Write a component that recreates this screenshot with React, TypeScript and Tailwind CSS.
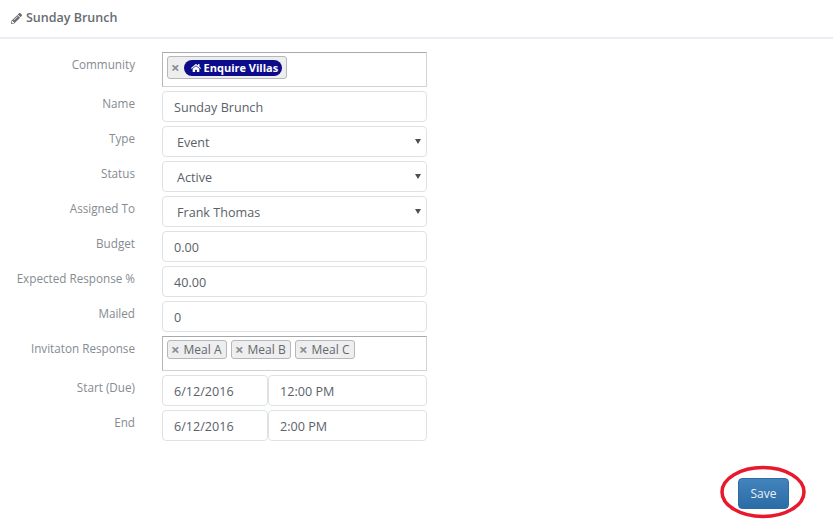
import { FaHome, FaPencilAlt } from "react-icons/fa";
import type { ReactNode } from "react";

const fieldBase =
  "h-[31px] rounded-[4px] border border-[#dfe2e5] bg-white pl-[11px] pr-2 pt-[2px] text-[12.6px] text-[#5a6168] outline-none";

const Row = ({ label, children }: { label: string; children: ReactNode }) => (
  <div className="flex items-start">
    <label className="w-[135px] shrink-0 pt-[3px] text-right text-[11.7px] leading-[18px] text-[#858b92]">{label}</label>
    <div className="ml-[27px] w-[265px]">{children}</div>
  </div>
);

const TextRow = ({ label, value }: { label: string; value: string }) => (
  <Row label={label}>
    <input className={fieldBase + " w-full"} readOnly value={value} />
  </Row>
);

const SelectRow = ({ label, value }: { label: string; value: string }) => (
  <Row label={label}>
    <div className="relative">
      <select
        className="h-[31px] w-full appearance-none rounded-[4px] border border-[#dfe2e5] bg-white pl-[14px] pt-[4px] text-[12.6px] text-[#5a6168] outline-none"
        defaultValue={value}
      >
        <option>{value}</option>
      </select>
      <svg className="absolute right-[6px] top-[13px] h-[5px] w-[6px]" viewBox="0 0 6 5">
        <path d="M0 0h6L3 5z" fill="#4a4f55" />
      </svg>
    </div>
  </Row>
);

const DateRow = ({ label, date, time }: { label: string; date: string; time: string }) => (
  <Row label={label}>
    <div className="flex">
      <input className={fieldBase + " w-[106px] shrink-0"} readOnly value={date} />
      <input className={fieldBase + " min-w-0 flex-1"} readOnly value={time} />
    </div>
  </Row>
);

const Remove = () => <span className="text-[15px] font-bold leading-none text-[#8a8d90]">×</span>;

const Chip = ({ children }: { children: ReactNode }) => (
  <span className="flex h-[19px] w-[60px] items-center gap-[4px] rounded-[3px] border border-[#b4b8bc] bg-[#eeeeee] pl-[3px] text-[12px] leading-none text-[#62686f]">
    <Remove />
    {children}
  </span>
);

const TagBox = ({ children }: { children: ReactNode }) => (
  <div className="flex h-[35px] items-start gap-[4px] border border-[#d0d2d4] border-t-[#a8a9ab] border-l-[#b4b5b7] bg-white pl-[4px] pt-[3px]">
    {children}
  </div>
);

export default function App() {
  return (
    <div className="relative h-[526px] w-[833px] overflow-hidden bg-white font-['Open_Sans',sans-serif]">
      <div className="flex h-[39px] items-center gap-[4px] border-b-2 border-[#e9edf1] pl-[11px] text-[12.5px] font-semibold text-[#666c72]">
        <FaPencilAlt className="h-[11px] w-[11px] text-[#6b6f74]" />
        Sunday Brunch
      </div>

      <div className="flex flex-col gap-[4px] pt-[13px]">
        <Row label="Community">
          <TagBox>
            <span className="flex h-[23px] items-center gap-[3px] rounded-[3px] border border-[#b4b8bc] bg-[#eeeeee] pl-[3px] pr-[4px]">
              <Remove />
              <span className="ml-[1px] flex h-[16px] items-center gap-[3px] rounded-full bg-[#0b0b8c] pl-[7px] pr-[4px] text-[11px] font-bold leading-none text-white">
                <FaHome className="h-[10px] w-[10px]" />
                Enquire Villas
              </span>
            </span>
          </TagBox>
        </Row>
        <TextRow label="Name" value="Sunday Brunch" />
        <SelectRow label="Type" value="Event" />
        <SelectRow label="Status" value="Active" />
        <SelectRow label="Assigned To" value="Frank Thomas" />
        <TextRow label="Budget" value="0.00" />
        <TextRow label="Expected Response %" value="40.00" />
        <TextRow label="Mailed" value="0" />
        <Row label="Invitaton Response">
          <TagBox>
            <Chip>Meal A</Chip>
            <Chip>Meal B</Chip>
            <Chip>Meal C</Chip>
          </TagBox>
        </Row>
        <DateRow label="Start (Due)" date="6/12/2016" time="12:00 PM" />
        <DateRow label="End" date="6/12/2016" time="2:00 PM" />
      </div>

      <div className="flex justify-end pr-[44px] pt-[37px]">
        <button className="h-[31px] w-[51px] rounded-[4px] border border-[#2e6da4] bg-gradient-to-b from-[#4384bd] to-[#2a6ca6] text-[12px] font-medium text-[#e8eff6]">
          Save
        </button>
      </div>

      {/* hand drawn annotation around the button */}
      <svg className="absolute left-[718px] top-[464px] h-[56px] w-[90px]" viewBox="0 0 90 56" fill="none">
        <ellipse cx="45" cy="28" rx="41" ry="24.5" stroke="#e8192c" strokeWidth="3.5" />
      </svg>
    </div>
  );
}
